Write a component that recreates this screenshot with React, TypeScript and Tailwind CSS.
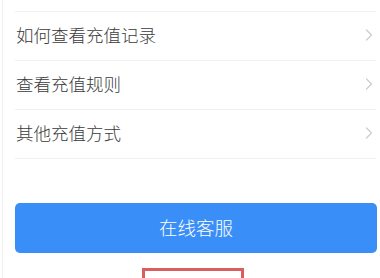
const items = ["如何查看充值记录", "查看充值规则", "其他充值方式"];

function Chevron() {
    return (
        <svg className="w-[8px] h-[12px]" viewBox="0 0 8 12" fill="none" stroke="#cccccc" strokeWidth="1.2">
            <path d="M1.5 1l5 5-5 5" strokeLinecap="round" strokeLinejoin="round" />
        </svg>
    );
}

export default function App() {
    return (
        <div
            className="w-[380px] h-[278px] overflow-hidden bg-white"
            style={{ fontFamily: '"Noto Sans CJK SC", "Noto Sans", sans-serif' }}
        >
            <div className="ml-[2px] h-full border-l border-[#f1f1f1] pl-[12px] pr-[4px]">
                <div className="h-[12px] border-b border-[#f0f0f0]" />
                {items.map((label) => (
                    <div
                        key={label}
                        className="h-[49px] flex items-center justify-between border-b border-[#f0f0f0] pl-[1px] pr-[3px] pb-[2px]"
                    >
                        <span className="text-[17.5px] font-light text-[#3a3a3a]">{label}</span>
                        <Chevron />
                    </div>
                ))}
                <button className="mt-[44px] w-[362px] h-[50px] rounded-[5px] bg-[#3a8ef7] text-white text-[18.5px] font-light flex items-center justify-center">
                    在线客服
                </button>
                <div className="mt-[15px] ml-[127px] w-[102px] h-[30px] border-[3px] border-[#d95f5f] bg-white" />
            </div>
        </div>
    );
}
